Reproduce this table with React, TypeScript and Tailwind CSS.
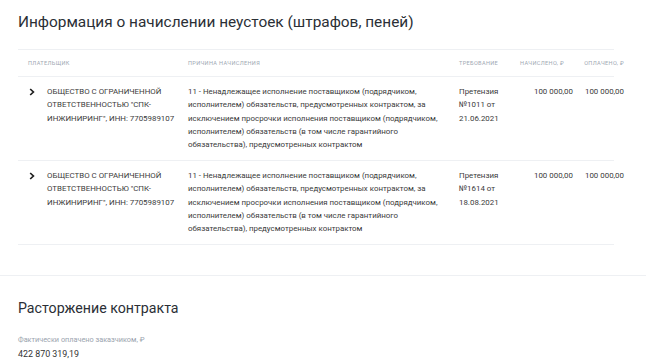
import React from 'react';

type Penalty = {
  payer: string;
  reason: string;
  claim: string;
  accrued: string;
  paid: string;
};

const reason =
  '11 - Ненадлежащее исполнение поставщиком (подрядчиком, исполнителем) обязательств, предусмотренных контрактом, за исключением просрочки исполнения поставщиком (подрядчиком, исполнителем) обязательств (в том числе гарантийного обязательства), предусмотренных контрактом';

const rows: Penalty[] = [
  {
    payer: 'ОБЩЕСТВО С ОГРАНИЧЕННОЙ ОТВЕТСТВЕННОСТЬЮ "СПК-ИНЖИНИРИНГ", ИНН: 7705989107',
    reason,
    claim: 'Претензия №1011 от 21.06.2021',
    accrued: '100 000,00',
    paid: '100 000,00',
  },
  {
    payer: 'ОБЩЕСТВО С ОГРАНИЧЕННОЙ ОТВЕТСТВЕННОСТЬЮ "СПК-ИНЖИНИРИНГ", ИНН: 7705989107',
    reason,
    claim: 'Претензия №1614 от 18.08.2021',
    accrued: '100 000,00',
    paid: '100 000,00',
  },
];

function Chevron() {
  return (
    <svg width="6" height="8" viewBox="0 0 6 8" className="mt-[3px] shrink-0">
      <path d="M1.2 1 L4.4 4 L1.2 7" fill="none" stroke="#1f1f1f" strokeWidth="1.7" />
    </svg>
  );
}

export default function App() {
  return (
    <div className="bg-white w-[646px] h-[361px] overflow-hidden font-['Roboto',sans-serif] text-[#3a3a3a]">
      <div className="px-[18px] pt-[12px]">
        <h1 className="text-[15.4px] leading-[20px] text-[#2b2f36]">
          Информация о начислении неустоек (штрафов, пеней)
        </h1>

        <div className="mt-[17px] mr-[14px] border-t border-[#eef0f3]">
          <div className="flex h-[27px] items-center border-b border-[#eef0f3] text-[5.6px] uppercase tracking-[0.06em] text-[#a0a8b3]">
            <div className="w-[170px] shrink-0 pl-[10px]">Плательщик</div>
            <div className="w-[271px] shrink-0">Причина начисления</div>
            <div className="w-[60px] shrink-0">Требование</div>
            <div className="w-[54px] shrink-0 pr-[9px] text-right">Начислено, ₽</div>
            <div className="w-[55px] shrink-0 pr-[4px] text-right">Оплачено, ₽</div>
          </div>

          {rows.map((r, i) => (
            <div key={i} className="flex h-[84px] border-b border-[#eef0f3] pt-[8px] text-[7.9px] leading-[13.3px]">
              <div className="flex w-[170px] shrink-0 gap-[12px] pl-[11px] pr-[6px]">
                <Chevron />
                <div className="flex-1">{r.payer}</div>
              </div>
              <div className="w-[271px] shrink-0 pr-[18px]">{r.reason}</div>
              <div className="w-[60px] shrink-0 pr-[14px]">{r.claim}</div>
              <div className="w-[54px] shrink-0 text-right">{r.accrued}</div>
              <div className="w-[55px] shrink-0 pr-[4px] text-right">{r.paid}</div>
            </div>
          ))}
        </div>
      </div>

      <div className="mt-[30px] border-t border-[#eef0f3] px-[18px] pt-[22px]">
        <h2 className="text-[14.2px] leading-[20px] text-[#2b2f36]">Расторжение контракта</h2>
        <div className="mt-[17px] text-[7.3px] leading-[10px] text-[#9aa3ae]">Фактически оплачено заказчиком, ₽</div>
        <div className="mt-[3px] text-[8.9px] leading-[12px] text-[#333]">422 870 319,19</div>
      </div>
    </div>
  );
}
